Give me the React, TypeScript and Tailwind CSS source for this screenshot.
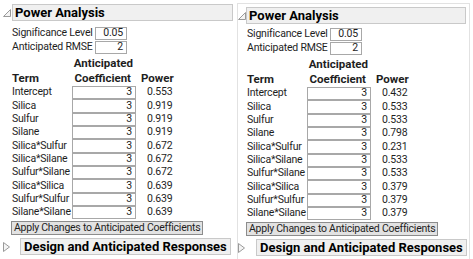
import React from "react";

// ---------------------------------------------------------------------------
// Data
// ---------------------------------------------------------------------------
const TERMS = [
  "Intercept",
  "Silica",
  "Sulfur",
  "Silane",
  "Silica*Sulfur",
  "Silica*Silane",
  "Sulfur*Silane",
  "Silica*Silica",
  "Sulfur*Sulfur",
  "Silane*Silane",
];

const LEFT_POWER = ["0.553", "0.919", "0.919", "0.919", "0.672", "0.672", "0.672", "0.639", "0.639", "0.639"];
const RIGHT_POWER = ["0.432", "0.533", "0.533", "0.798", "0.231", "0.533", "0.533", "0.379", "0.379", "0.379"];

const FONT = { fontFamily: 'Roboto, "Liberation Sans", sans-serif' };

// ---------------------------------------------------------------------------
// Small pieces
// ---------------------------------------------------------------------------
function OpenTriangle() {
  return (
    <svg width="8" height="8" viewBox="0 0 8 8" className="block shrink-0">
      <path d="M7.5 0.5 L7.5 7.5 L0.5 7.5 Z" fill="#f4f4f4" stroke="#9a9a9a" strokeWidth="1" />
    </svg>
  );
}

function ClosedTriangle() {
  return (
    <svg width="7" height="10" viewBox="0 0 7 10" className="block shrink-0">
      <path d="M0.5 0.5 L6.5 5 L0.5 9.5 Z" fill="#f4f4f4" stroke="#9a9a9a" strokeWidth="1" />
    </svg>
  );
}

function PowerPanel({ power, right }: { power: string[]; right?: boolean }) {
  return (
    <div className="flex flex-col whitespace-nowrap leading-none text-[#1e1e1e]" style={FONT}>
      {/* Header */}
      <div className="flex items-center h-[17px]">
        <OpenTriangle />
        <div
          className={`${right ? "ml-0 w-[220px]" : "ml-[1px] w-[221px]"} h-[17px] bg-[#f0f0f0] border border-[#c9c9c9] flex items-center pl-[2px]`}
        >
          <span className="text-[13px] font-bold text-black">Power Analysis</span>
        </div>
      </div>

      {/* Settings */}
      <div
        className={`pl-[9px] ${right ? "mt-[4px]" : "mt-[6px]"} flex flex-col gap-[1px] text-[10.5px] tracking-[-0.2px]`}
      >
        <div className="flex items-center h-[13px]">
          <span className="w-[83px]">Significance Level</span>
          <div className="w-[32px] h-[13px] border border-[#a8a8a8] bg-white flex items-center justify-end pr-[3px]">0.05</div>
        </div>
        <div className="flex items-center h-[13px]">
          <span className="w-[83px]">Anticipated RMSE</span>
          <div className="w-[32px] h-[13px] border border-[#a8a8a8] bg-white flex items-center justify-end pr-[3px]">2</div>
        </div>
      </div>

      {/* Table */}
      <div className="pl-[9px] mt-[2px] text-[10.5px] tracking-[-0.2px]">
        <div className="grid grid-cols-[60px_64px_auto] font-bold text-[11.5px] tracking-normal leading-[15px]">
          <span />
          <span className="text-right pr-[3px]">Anticipated</span>
          <span />
          <span>Term</span>
          <span className="text-right pr-[5px]">Coefficient</span>
          <span className="pl-[5px]">Power</span>
        </div>
        <div className="flex flex-col">
          {TERMS.map((t, i) => (
            <div key={t} className="grid grid-cols-[60px_64px_auto] items-center h-[13.33px]">
              <span>{t}</span>
              <div className="w-[64px] h-[13.33px] border border-[#a8a8a8] bg-white flex items-center justify-end pr-[3px]">
                3
              </div>
              <span className="pl-[11px]">{power[i]}</span>
            </div>
          ))}
        </div>
      </div>

      {/* Apply */}
      <div className="flex pl-[8px] mt-[2px]">
        <div className="flex items-center h-[14px] px-[2px] bg-[#e2e2e2] border border-[#8c8c8c] text-[10.5px] tracking-[-0.25px]">
          Apply Changes to Anticipated Coefficients
        </div>
      </div>

      {/* Design */}
      <div className="flex items-center mt-[3px] h-[17px]">
        <ClosedTriangle />
        <div
          className={`${right ? "ml-[11px]" : "ml-[10px]"} w-[211px] h-[17px] bg-[#f0f0f0] border border-[#c9c9c9] flex items-center pl-[3px]`}
        >
          <span className="text-[13px] font-bold text-black">Design and Anticipated Responses</span>
        </div>
      </div>
    </div>
  );
}

// ---------------------------------------------------------------------------
// Page
// ---------------------------------------------------------------------------
export default function App() {
  return (
    <div className="w-[473px] h-[259px] bg-white flex overflow-hidden">
      <div className="w-[237px] pl-[3px] pt-[4px] shrink-0">
        <PowerPanel power={LEFT_POWER} />
      </div>
      <div className="w-[233px] h-[262px] mt-[3px] shrink-0 border-l border-t border-r border-[#e2e2e2] pt-[3px]">
        <PowerPanel power={RIGHT_POWER} right />
      </div>
    </div>
  );
}
